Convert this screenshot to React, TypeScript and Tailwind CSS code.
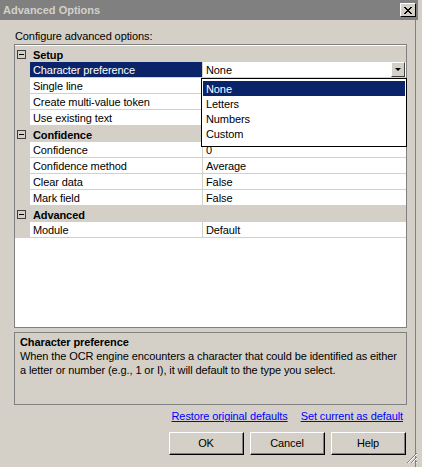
import React from 'react';

type Row = { name: string; value: string; selected?: boolean; dropdown?: boolean };
type Category = { title: string; rows: Row[] };

const categories: Category[] = [
  {
    title: 'Setup',
    rows: [
      { name: 'Character preference', value: 'None', selected: true, dropdown: true },
      { name: 'Single line', value: '' },
      { name: 'Create multi-value token', value: '' },
      { name: 'Use existing text', value: '' },
    ],
  },
  {
    title: 'Confidence',
    rows: [
      { name: 'Confidence', value: '0' },
      { name: 'Confidence method', value: 'Average' },
      { name: 'Clear data', value: 'False' },
      { name: 'Mark field', value: 'False' },
    ],
  },
  {
    title: 'Advanced',
    rows: [{ name: 'Module', value: 'Default' }],
  },
];

const options = ['None', 'Letters', 'Numbers', 'Custom'];

function MinusBox() {
  return (
    <div className="ml-[2px] flex h-[9px] w-[9px] items-center justify-center border border-[#404040] bg-[#d4d0c8]">
      <div className="h-[1px] w-[5px] bg-black" />
    </div>
  );
}

function CategoryRow({ title }: { title: string }) {
  return (
    <div className="flex h-[16px] items-center bg-[#d4d0c8]">
      <div className="flex w-[15px] shrink-0 items-center">
        <MinusBox />
      </div>
      <div className="pl-[3px] pt-[1px] font-bold leading-[16px]">{title}</div>
    </div>
  );
}

function PropRow({ row }: { row: Row }) {
  return (
    <div className="flex h-[16px]">
      <div className="w-[15px] shrink-0 bg-[#d4d0c8]" />
      <div
        className={`w-[172px] shrink-0 border-b border-[#d4d0c8] pl-[3px] leading-[16px] ${
          row.selected ? 'bg-[#0a246a] text-white' : 'bg-white'
        }`}
      >
        {row.name}
      </div>
      <div className="w-[1px] shrink-0 bg-[#d4d0c8]" />
      <div className="flex flex-1 items-start border-b border-[#d4d0c8] bg-white">
        <span className="flex-1 pl-[3px] leading-[16px]">{row.value}</span>
        {row.dropdown && (
          <div className="mr-[1px] flex h-[15px] w-[14px] items-center justify-center border border-t-white border-l-white border-r-[#404040] border-b-[#404040] bg-[#d4d0c8]">
            <div className="h-0 w-0 border-x-[3px] border-t-[3px] border-x-transparent border-t-black" />
          </div>
        )}
      </div>
    </div>
  );
}

function Button({ label }: { label: string }) {
  return (
    <button className="h-[23px] w-[75px] border border-t-white border-l-white border-r-black border-b-black bg-[#d4d0c8] p-0">
      <div className="flex h-full w-full items-center justify-center border-r border-b border-[#808080] leading-none">
        {label}
      </div>
    </button>
  );
}

export default function App() {
  return (
    <div
      className="relative h-[467px] w-[422px] overflow-hidden bg-[#d4d0c8] text-[11px] tracking-[-0.1px] text-black"
      style={{ fontFamily: '"Liberation Sans", Arial, sans-serif' }}
    >
      {/* title bar */}
      <div className="flex h-[20px] w-[418px] items-center justify-between bg-[#808080] pl-[3px] pr-[2px]">
        <span className="font-bold tracking-normal text-[#d4d0c8]">Advanced Options</span>
        <div className="flex h-[14px] w-[16px] items-center justify-center border border-t-white border-l-white border-r-black border-b-black bg-[#d4d0c8]">
          <svg width="8" height="7" viewBox="0 0 8 7">
            <path d="M0 0 L7 7 M1 0 L8 7 M7 0 L0 7 M8 0 L1 7" stroke="black" strokeWidth="1" />
          </svg>
        </div>
      </div>

      <div className="h-[447px] w-[416px] border-r border-[#808080] pl-[14px] pr-[9px]">
        <div className="pt-[8px] pl-[1px] leading-[16px]">Configure advanced options:</div>

        {/* property grid */}
        <div className="relative h-[284px] w-[393px] border border-[#808080] bg-white pt-[1px]">
          {categories.map((c) => (
            <div key={c.title}>
              <CategoryRow title={c.title} />
              {c.rows.map((r) => (
                <PropRow key={r.name} row={r} />
              ))}
            </div>
          ))}

          {/* open dropdown list */}
          <div className="absolute left-[186px] top-[33px] h-[69px] w-[206px] border border-black bg-white pt-[2px] pl-[1px] pr-[1px]">
            {options.map((o, i) => (
              <div
                key={o}
                className={`h-[15px] pl-[3px] pt-[1px] leading-[15px] ${i === 0 ? 'bg-[#0a246a] text-white' : ''}`}
              >
                {o}
              </div>
            ))}
          </div>
        </div>

        {/* description */}
        <div className="mt-[4px] h-[73px] w-[393px] whitespace-nowrap border border-[#808080] pl-[5px] pt-[2px] leading-[14px]">
          <div className="font-bold">Character preference</div>
          <div>
            When the OCR engine encounters a character that could be identified as either
            <br />
            a letter or number (e.g., 1 or I), it will default to the type you select.
          </div>
        </div>

        <div className="mt-[4px] flex h-[14px] justify-end gap-[13px] pr-[3px] leading-[14px]">
          <a className="text-[#0000ff] underline">Restore original defaults</a>
          <a className="text-[#0000ff] underline">Set current as default</a>
        </div>

        <div className="mt-[9px] flex justify-end gap-[6px]">
          <Button label="OK" />
          <Button label="Cancel" />
          <Button label="Help" />
        </div>
      </div>

      {/* size grip */}
      <svg className="absolute left-[406px] top-[452px]" width="12" height="12" viewBox="0 0 12 12">
        <path d="M11 1 L1 11 M11 5 L5 11 M11 9 L9 11" stroke="#808080" strokeWidth="1" />
        <path d="M11 2 L2 11 M11 6 L6 11 M11 10 L10 11" stroke="#ffffff" strokeWidth="1" />
      </svg>
    </div>
  );
}
